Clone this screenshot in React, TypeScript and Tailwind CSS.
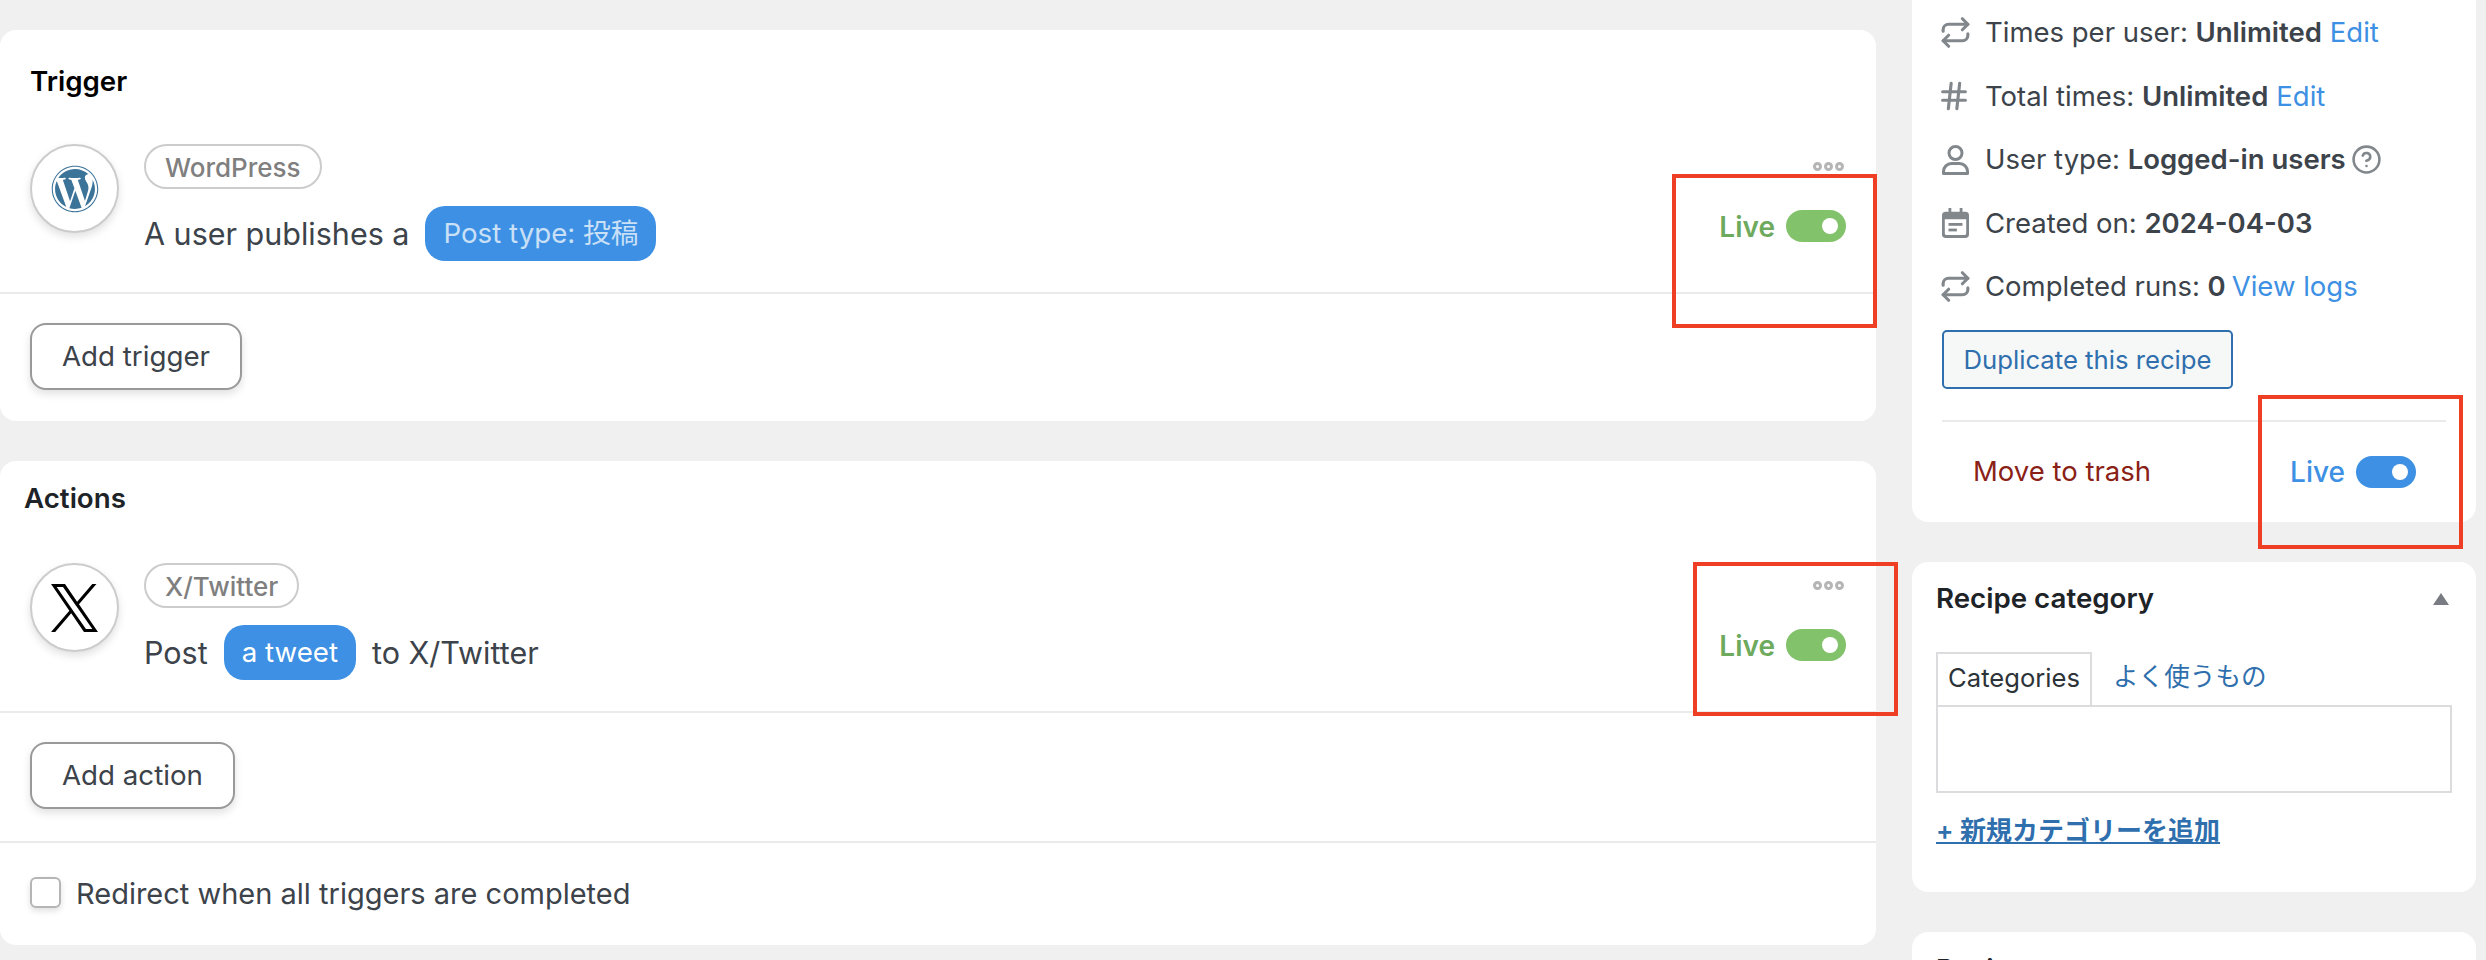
import { Hash, Repeat, CircleHelp } from "lucide-react"
import { FaWordpress } from "react-icons/fa"
import type { ReactNode } from "react"

const font = "font-['Inter','Noto_Sans_CJK_JP',sans-serif]"

function Toggle({ blue }: { blue?: boolean }) {
  return (
    <div className={`flex h-[32px] w-[60px] items-center justify-end rounded-full pr-[8px] ${blue ? "bg-[#3d90e3]" : "bg-[#82c26b]"}`}>
      <div className="h-[16px] w-[16px] rounded-full bg-white" />
    </div>
  )
}

function Dots() {
  return (
    <div className="flex gap-[2px]">
      <div className="h-[9px] w-[9px] rounded-full border-[3px] border-[#b5b5b5]" />
      <div className="h-[9px] w-[9px] rounded-full border-[3px] border-[#b5b5b5]" />
      <div className="h-[9px] w-[9px] rounded-full border-[3px] border-[#b5b5b5]" />
    </div>
  )
}

function Item({ icon, integration, children }: { icon: ReactNode; integration: string; children: ReactNode }) {
  return (
    <div className="flex h-[148px] items-start pl-[30px] pr-[30px]">
      <div className="flex h-[89px] w-[89px] shrink-0 items-center justify-center rounded-full border-2 border-[#cccccc] bg-white shadow-[0_4px_8px_rgba(0,0,0,0.12)]">
        {icon}
      </div>
      <div className="ml-[25px] flex-1">
        <div className="flex">
          <span className="flex h-[45px] items-center rounded-full border-2 border-[#cccccc] px-[19px] pt-[1px] text-[26px] font-medium text-[#7f7f7f]">{integration}</span>
        </div>
        <div className="mt-[17px] flex h-[55px] items-center text-[30.5px] text-[#3c434a]">{children}</div>
      </div>
      <div className="mt-[18px] flex flex-col items-end">
        <div className="pr-[2px]">
          <Dots />
        </div>
        <div className="mt-[39px] flex h-[32px] items-center gap-[11px]">
          <span className="pt-[2px] text-[28px] leading-none font-semibold text-[#6eaa5d]">Live</span>
          <Toggle />
        </div>
      </div>
    </div>
  )
}

function Token({ children }: { children: ReactNode }) {
  return <span className="flex h-[55px] items-center rounded-[20px] bg-[#3d90e3] px-[18px] text-[27.7px]">{children}</span>
}

function AddButton({ children }: { children: ReactNode }) {
  return (
    <button className="flex h-[67px] items-center rounded-[16px] border-2 border-[#999999] bg-white px-[30px] text-[27.7px] text-[#3c434a] shadow-[0_4px_8px_rgba(0,0,0,0.12)]">
      {children}
    </button>
  )
}

function MetaRow({ icon, children }: { icon: ReactNode; children: ReactNode }) {
  return (
    <div className="flex h-[63.5px] items-center text-[27.5px] text-[#3c434a]">
      <div className="flex w-[43px] shrink-0 text-[#82878c]">{icon}</div>
      <div className="flex items-center gap-[8px] whitespace-nowrap">{children}</div>
    </div>
  )
}

function XLogo() {
  return (
    <svg width="47" height="48" viewBox="0 0 1200 1227" fill="#000000">
      <path d="M714.163 519.284L1160.89 0H1055.03L667.137 450.887L357.328 0H0L468.492 681.821L0 1226.37H105.866L515.491 750.218L842.672 1226.37H1200L714.137 519.284H714.163ZM569.165 687.828L521.697 619.934L144.011 79.6944H306.615L611.412 515.685L658.88 583.579L1055.08 1150.3H892.476L569.165 687.854V687.828Z" />
    </svg>
  )
}

function UserIcon() {
  return (
    <svg width="27" height="30" viewBox="0 0 27 30" fill="none" stroke="currentColor" strokeWidth="3">
      <circle cx="13.5" cy="8" r="6.5" />
      <path d="M1.5 28.5v-2a8 8 0 0 1 8-8h8a8 8 0 0 1 8 8v2z" strokeLinejoin="round" />
    </svg>
  )
}

function CalendarIcon() {
  return (
    <svg width="27" height="30" viewBox="0 0 29 32" fill="currentColor">
      <path d="M7 0h3v4h9V0h3v4h3a4 4 0 0 1 4 4v20a4 4 0 0 1-4 4H4a4 4 0 0 1-4-4V8a4 4 0 0 1 4-4h3zM3 12v15a2 2 0 0 0 2 2h19a2 2 0 0 0 2-2V12z" />
      <rect x="7" y="16" width="15" height="3" />
      <rect x="7" y="22" width="9" height="3" />
    </svg>
  )
}

export default function App() {
  return (
    <div className={`relative flex h-screen items-start overflow-hidden bg-[#f0f0f0] ${font}`}>
      {/* left column */}
      <div className="w-[1876px] shrink-0 pt-[30px]">
        <div className="rounded-[16px] bg-white">
          <h2 className="h-[66px] pl-[30px] pt-[36px] text-[27.7px] leading-[30px] font-semibold text-black">Trigger</h2>
          <div className="mt-[48px]">
            <Item icon={<FaWordpress className="h-[48px] w-[48px] text-[#3b7399]" />} integration="WordPress">
              A user publishes a
              <span className="ml-[16px] text-[#c9e0f7]">
                <Token>Post type: 投稿</Token>
              </span>
            </Item>
          </div>
          <div className="h-[2px] bg-[#eaeaea]" />
          <div className="pb-[31px] pl-[30px] pt-[29px]">
            <AddButton>Add trigger</AddButton>
          </div>
        </div>

        <div className="mt-[40px] rounded-[16px] bg-white">
          <h2 className="pl-[24px] pt-[22px] text-[27.7px] leading-[30px] font-semibold text-[#1d2327]">Actions</h2>
          <div className="mt-[50px]">
            <Item icon={<XLogo />} integration="X/Twitter">
              Post
              <span className="mx-[16px] text-white">
                <Token>a tweet</Token>
              </span>
              to X/Twitter
            </Item>
          </div>
          <div className="h-[2px] bg-[#eaeaea]" />
          <div className="pb-[32px] pl-[30px] pt-[29px]">
            <AddButton>Add action</AddButton>
          </div>
          <div className="h-[2px] bg-[#eaeaea]" />
          <div className="flex items-center pb-[37px] pl-[30px] pt-[33px]">
            <div className="h-[31px] w-[31px] rounded-[6px] border-2 border-[#b5b5b5] bg-white shadow-[0_3px_6px_rgba(0,0,0,0.12)]" />
            <span className="ml-[15px] pt-[3px] text-[29px] leading-none text-[#3c434a]">Redirect when all triggers are completed</span>
          </div>
        </div>
      </div>

      {/* right column */}
      <div className="ml-[36px] w-[564px] shrink-0 -mt-[16px]">
        <div className="rounded-[16px] bg-white pl-[30px] pr-[30px] pt-[17px]">
          <MetaRow icon={<Repeat className="-ml-[3px] h-[33px] w-[33px]" strokeWidth={2.3} />}>
            <span>Times per user: <b className="font-semibold">Unlimited</b></span>
            <a className="text-[#3d90e3]">Edit</a>
          </MetaRow>
          <MetaRow icon={<Hash className="-ml-[5px] h-[34px] w-[34px]" strokeWidth={2.2} />}>
            <span>Total times: <b className="font-semibold">Unlimited</b></span>
            <a className="text-[#3d90e3]">Edit</a>
          </MetaRow>
          <MetaRow icon={<UserIcon />}>
            <span>User type: <b className="font-semibold">Logged-in users</b></span>
            <CircleHelp className="-ml-[3px] h-[31px] w-[31px] text-[#82878c]" strokeWidth={2} />
          </MetaRow>
          <MetaRow icon={<CalendarIcon />}>
            <span>Created on: <b className="font-semibold">2024-04-03</b></span>
          </MetaRow>
          <MetaRow icon={<Repeat className="-ml-[3px] h-[33px] w-[33px]" strokeWidth={2.3} />}>
            <span>Completed runs: <b className="font-semibold">0</b></span>
            <a className="-ml-[2px] text-[#3d90e3]">View logs</a>
          </MetaRow>
          <button className="mt-[11px] flex h-[59px] w-[291px] items-center justify-center rounded-[5px] border-2 border-[#2f6fad] bg-[#f6f7f7] pt-[3px] text-[25.7px] text-[#2f6fad]">
            Duplicate this recipe
          </button>
          <div className="mt-[31px] h-[2px] bg-[#eaeaea]" />
          <div className="flex h-[100px] items-start justify-between pl-[31px] pr-[30px] pt-[34px]">
            <a className="flex h-[32px] items-center text-[27.5px] text-[#8a2116]">Move to trash</a>
            <div className="flex h-[32px] items-center gap-[11px]">
              <span className="text-[28px] leading-none font-medium text-[#3d90e3]">Live</span>
              <Toggle blue />
            </div>
          </div>
        </div>

        <div className="mt-[40px] h-[330px] rounded-[16px] bg-white pl-[24px] pr-[24px] pt-[20px]">
          <div className="flex h-[34px] items-center justify-between">
            <h3 className="text-[27.7px] font-semibold text-[#1d2327]">Recipe category</h3>
            <div className="mr-[3px] h-0 w-0 border-x-[8px] border-b-[12px] border-x-transparent border-b-[#787c82]" />
          </div>
          <div className="mt-[37px] flex h-[52px] items-center">
            <div className="relative z-10 flex h-[53px] w-[156px] items-center justify-center border-2 border-b-0 border-[#dcdcde] bg-white pb-[3px] text-[25.6px] text-[#2c3338]">Categories</div>
            <a className="ml-[21px] pb-[3px] text-[25.6px] text-[#2f6fad]">よく使うもの</a>
          </div>
          <div className="h-[88px] border-2 border-[#dcdcde] bg-white" />
          <a className="mt-[22px] block text-[26px] font-semibold leading-[32px] text-[#2f6fad] underline">+ 新規カテゴリーを追加</a>
        </div>

        <div className="mt-[40px] h-[200px] rounded-[16px] bg-white pl-[24px] pt-[20px]">
          <h3 className="h-[34px] text-[27.7px] leading-[34px] font-semibold text-[#1d2327]">Recipe tags</h3>
        </div>
      </div>

      {/* red annotation boxes */}
      <div className="absolute left-[1672px] top-[174px] h-[154px] w-[205px] border-4 border-[#ee3f24]" />
      <div className="absolute left-[1693px] top-[562px] h-[154px] w-[205px] border-4 border-[#ee3f24]" />
      <div className="absolute left-[2258px] top-[395px] h-[154px] w-[205px] border-4 border-[#ee3f24]" />
    </div>
  )
}
